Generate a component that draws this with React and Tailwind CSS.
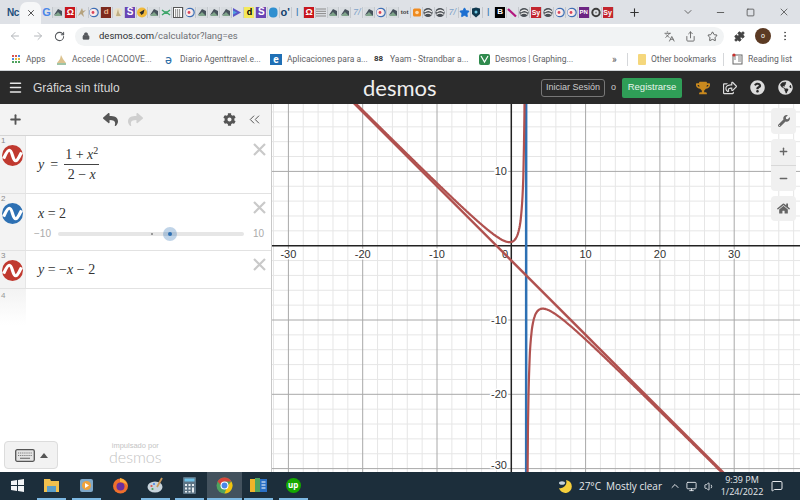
import {
  ArrowLeft,
  ArrowRight,
  RotateCw,
  Lock,
  Star,
  Share,
  Puzzle,
  MoreVertical,
  Plus,
  Minus,
  X,
  ChevronDown,
  ChevronUp,
  Square,
  Menu,
  ChevronsLeft,
  Monitor,
  Volume1,
  MessageSquare,
  Languages,
} from 'lucide-react';
import {
  FaReply,
  FaShare,
  FaCog,
  FaWrench,
  FaHome,
  FaTrophy,
  FaRegShareSquare,
  FaQuestionCircle,
  FaGlobeAmericas,
} from 'react-icons/fa';

const FAVICONS = [
  'g', 'doc', 'omega', 'fig', 'circ', 'dred', 'figpale', 'spurple', 'rocket', 'doc', 'green', 'calc', 'circ', 'doc', 'doc', 'doc',
  'play', 'dyellow', 'spurple', 'blob', 'od', 'l', 'omega', 'lines', 'doc', 'doc', 'seven', 'doc', 'circ', 'doc', 'fox', 'orange',
  'swirl', 'swirl', 'seven', 'star', 'shield', 'l', 'bblack', 'slash', 'swirl', 'sy', 'swirl', 'circ', 'circ', 'pn', 'ring', 'sy',
];

function Favicon({ kind }) {
  const box = 'w-[10px] h-[11px] flex items-center justify-center leading-none font-bold';
  switch (kind) {
    case 'g':
      return <span className={`${box} text-[11px] text-[#4a86e8]`}>G</span>;
    case 'omega':
      return <span className={`${box} bg-[#c8161d] text-white text-[9px]`}>Ω</span>;
    case 'dred':
      return <span className={`${box} bg-[#7d2a1e] text-[#e8b48c] text-[8px]`}>d</span>;
    case 'spurple':
      return <span className={`${box} bg-[#6a45b5] text-white text-[10px]`}>S</span>;
    case 'dyellow':
      return <span className={`${box} bg-[#f3e85c] text-black text-[9px]`}>d</span>;
    case 'od':
      return <span className={`${box} text-[#123f6d] text-[11px]`}>o'</span>;
    case 'l':
      return <span className={`${box} text-[#3f7fb5] text-[11px] font-normal`}>l</span>;
    case 'seven':
      return <span className={`${box} text-[#7fa3c9] text-[9px] italic font-normal`}>7/</span>;
    case 'bblack':
      return <span className={`${box} bg-black text-white text-[8px]`}>B</span>;
    case 'sy':
      return <span className={`${box} bg-[#c3252e] text-white text-[7px]`}>Sy</span>;
    case 'pn':
      return <span className={`${box} bg-[#6c2583] text-white text-[6px]`}>PN</span>;
    case 'fox':
      return <span className={`${box} text-[#3b3b3b] text-[6px]`}>tot</span>;
    case 'star':
      return <Star size={11} className="text-[#1c6fd1] fill-[#1c6fd1]" />;
    default:
      break;
  }
  const drawings = {
    doc: (
      <>
        <rect x="0" y="0" width="10" height="11" fill="#d8dce0" />
        <path d="M1 8 L5 2 L9 4 L9 9 L4 7 Z" fill="#47525c" />
        <path d="M1 9 L5 5 L9 9 Z" fill="#7fa48a" />
      </>
    ),
    fig: <path d="M5 1 L6 4 L9 3 L6 6 L7 10 L4 7 L1 9 L3 5 Z" fill="#b5a27e" />,
    figpale: (
      <>
        <circle cx="5" cy="5.5" r="4.5" fill="#e9e1c9" />
        <path d="M5 2 L6 6 L8 9 L3 9 Z" fill="#bfae84" />
      </>
    ),
    circ: (
      <>
        <circle cx="5" cy="5.5" r="4.2" fill="none" stroke="#3f6fb5" strokeWidth="1.2" />
        <circle cx="4" cy="5.5" r="3.4" fill="#fbeaea" />
        <circle cx="4" cy="5.5" r="1.4" fill="#d9455a" />
      </>
    ),
    rocket: (
      <>
        <circle cx="5" cy="5.5" r="5" fill="#f1b93a" />
        <path d="M7.5 2.5 L6.5 6.5 L4.5 8 L3.5 6.5 L2.5 5.5 Z" fill="#2c2c2c" />
      </>
    ),
    green: <path d="M1 3 L5 6 L9 3 M1 8 L5 5 L9 8" fill="none" stroke="#3fa66b" strokeWidth="1.5" />,
    calc: (
      <>
        <rect x="0.5" y="0.5" width="9" height="10" fill="#fff" stroke="#555" />
        <path d="M2 3 H8 M2 5 H8 M2 7 H8 M2 9 H8" stroke="#3c3c3c" strokeWidth="1" strokeDasharray="1.2 0.8" />
      </>
    ),
    play: (
      <>
        <path d="M1 1 L9 5.5 L1 10 Z" fill="#5a55c8" />
        <path d="M1 3.5 L5 5.5 L1 7.5 Z" fill="#4fa3e0" />
      </>
    ),
    blob: <rect x="1" y="0.5" width="8.5" height="10" rx="4" fill="#2f8fd0" />,
    lines: <path d="M0 2 H10 M0 4.3 H10 M0 6.6 H10 M0 9 H10" stroke="#8a8a8a" strokeWidth="1" />,
    orange: (
      <>
        <rect x="1" y="1.5" width="8" height="8" rx="1.5" fill="#ef8a1e" />
        <circle cx="5" cy="5.5" r="1.8" fill="#ffd9a8" />
      </>
    ),
    swirl: (
      <>
        <circle cx="5" cy="5.5" r="4.6" fill="#4a4f55" />
        <path d="M1.5 5 C4 2.5 7 3 9 5 M1.5 7.5 C4 5.5 6.5 6 8.5 7.5" fill="none" stroke="#e8e8e8" strokeWidth="1.2" />
      </>
    ),
    shield: (
      <>
        <path d="M1 1.5 L5 0.5 L9 1.5 L9 7 L5 10.5 L1 7 Z" fill="#10394f" />
        <circle cx="5" cy="5" r="1.5" fill="#6fc7e0" />
      </>
    ),
    slash: <path d="M1 2 L9 9.5" stroke="#b3177e" strokeWidth="2.2" />,
    ring: (
      <>
        <circle cx="5" cy="5.5" r="3.7" fill="none" stroke="#3d3d3d" strokeWidth="2" />
        <circle cx="5" cy="5.5" r="1" fill="#8a8a8a" />
      </>
    ),
  };
  return (
    <svg width="10" height="11" viewBox="0 0 10 11">
      {drawings[kind]}
    </svg>
  );
}

function TabStrip() {
  return (
    <div className="h-[24px] shrink-0 bg-[#dee1e6] flex items-center pl-[7px] font-['Liberation_Sans',sans-serif]">
      <span className="w-[12px] text-[10px] font-bold text-[#1d4f7c] tracking-tighter">Nc</span>
      <div className="ml-[1px] w-[21px] h-[22px] mt-[2px] bg-[#f6f7f8] rounded-t-[7px] flex items-center justify-center">
        <X size={10} className="text-[#333]" strokeWidth={2} />
      </div>
      <div className="flex items-center">
        {FAVICONS.map((kind, i) => (
          <div key={i} className="w-[11.94px] flex items-center justify-center border-r border-[#c4c8cd]">
            <Favicon kind={kind} />
          </div>
        ))}
      </div>
      <Plus size={13} className="ml-[14px] text-[#333]" strokeWidth={2} />
      <div className="flex-1" />
      <ChevronDown size={12} className="text-[#666] mr-[21px]" />
      <Minus size={11} className="text-[#555] mr-[20px]" />
      <Square size={9} className="text-[#444] mr-[23px]" />
      <X size={12} className="text-[#444] mr-[10px]" strokeWidth={1.5} />
    </div>
  );
}

function Toolbar() {
  return (
    <div className="h-[24px] shrink-0 bg-white flex items-center font-['Roboto',sans-serif]">
      <ArrowLeft size={12} className="ml-[9px] text-[#b4b7bb]" />
      <ArrowRight size={12} className="ml-[11px] text-[#b4b7bb]" />
      <RotateCw size={11} className="ml-[10px] text-[#55585c]" strokeWidth={2.2} />
      <div className="ml-[10px] w-[649px] h-[19px] bg-[#f1f3f4] rounded-full flex items-center pl-[7px] pr-[6px]">
        <Lock size={8} className="text-[#55585c] fill-[#55585c]" />
        <span className="ml-[9px] text-[9.5px] text-[#2c2e31]">
          desmos.com<span className="text-[#6d7074]">/calculator?lang=es</span>
        </span>
        <div className="flex-1" />
        <Languages size={11} className="text-[#666]" />
        <Share size={11} className="ml-[10px] text-[#666]" />
        <Star size={11} className="ml-[11px] text-[#555]" />
      </div>
      <Puzzle size={11} className="ml-[10px] text-[#444] fill-[#444]" />
      <div className="ml-[10px] w-[16px] h-[16px] rounded-full bg-[#5b3a23] text-white text-[7px] flex items-center justify-center">o</div>
      <MoreVertical size={12} className="ml-[8px] text-[#555]" />
    </div>
  );
}

function Bookmark({ icon, label, className = '' }) {
  return (
    <div className={`flex items-center gap-[5px] whitespace-nowrap ${className}`}>
      {icon}
      <span>{label}</span>
    </div>
  );
}

function Bookmarks() {
  return (
    <div className="h-[23px] shrink-0 bg-white flex items-center text-[8.5px] text-[#5f6266] font-['Roboto',sans-serif] border-b border-[#d0d3d6]">
      <Bookmark
        className="ml-[11px] w-[39px]"
        label="Apps"
        icon={
          <svg width="10" height="10" viewBox="0 0 10 10">
            <path d="M1 1h2v2H1z M4 1h2v2H4z" fill="#d9534f" />
            <path d="M7 1h2v2H7z M1 4h2v2H1z" fill="#4a86e8" />
            <path d="M4 4h2v2H4z M7 4h2v2H7z" fill="#e8b63a" />
            <path d="M1 7h2v2H1z M4 7h2v2H4z M7 7h2v2H7z" fill="#4fa35f" />
          </svg>
        }
      />
      <Bookmark
        className="ml-[6px] w-[109px]"
        label="Accede | CACOOVE..."
        icon={
          <svg width="11" height="11" viewBox="0 0 11 11">
            <path d="M5 1 L7 5 L10 9 L1 9 L4 5 Z" fill="#dcc28e" />
            <path d="M1 10 H10" stroke="#7fb08a" strokeWidth="1.5" />
          </svg>
        }
      />
      <Bookmark
        className="w-[105px]"
        label="Diario Agenttravel.e..."
        icon={<span className="w-[10px] text-[13px] leading-none text-[#2e6fa8]">ә</span>}
      />
      <Bookmark
        className="w-[104px]"
        label="Aplicaciones para a..."
        icon={<span className="w-[12px] h-[11px] bg-[#1f6fb5] text-white text-[10px] font-bold leading-[11px] text-center">e</span>}
      />
      <Bookmark
        className="w-[105px]"
        label="Yaam - Strandbar a..."
        icon={<span className="w-[11px] text-[8px] leading-none font-bold text-[#333]">88</span>}
      />
      <Bookmark
        className="w-[133px]"
        label="Desmos | Graphing..."
        icon={
          <svg width="11" height="11" viewBox="0 0 11 11">
            <rect width="11" height="11" rx="2" fill="#2f8a4d" />
            <path d="M2 2 L5.5 8 L9 2" fill="none" stroke="#fff" strokeWidth="1.2" />
          </svg>
        }
      />
      <span className="w-[10px] text-[10px] text-[#555]">»</span>
      <div className="ml-[5px] h-[13px] w-px bg-[#d5d7da]" />
      <Bookmark
        className="ml-[10px] w-[85px]"
        label="Other bookmarks"
        icon={<span className="w-[8px] h-[11px] rounded-[1px] bg-[#f5d77c]" />}
      />
      <div className="h-[13px] w-px bg-[#d5d7da]" />
      <Bookmark
        className="ml-[8px]"
        label="Reading list"
        icon={
          <svg width="11" height="12" viewBox="0 0 11 12">
            <rect x="1" y="2" width="9" height="9" fill="none" stroke="#666" />
            <path d="M6 4 H9 M6 6 H9 M6 8 H9 M2 4 H4 M2 6 H4" stroke="#666" strokeWidth="0.8" />
            <circle cx="2" cy="2" r="1.6" fill="#c9302c" />
          </svg>
        }
      />
    </div>
  );
}

function TopBar() {
  return (
    <div className="h-[33px] shrink-0 bg-[#2a2a2a] flex items-center text-white font-['Liberation_Sans',sans-serif]">
      <Menu size={15} className="ml-[8px] text-[#e8e8e8]" strokeWidth={2.4} />
      <span className="ml-[10px] w-[140px] text-[12px] text-[#d8d8d8]">Gráfica sin título</span>
      <span className="ml-[190px] w-[92px] text-[22px] leading-none font-['Lato',sans-serif] text-[#efefef]">desmos</span>
      <div className="ml-[86px] w-[64px] h-[18px] border border-[#777] rounded-[3px] text-[9px] text-[#ccc] flex items-center justify-center">
        Iniciar Sesión
      </div>
      <span className="w-[17px] text-center text-[9px] text-[#ccc]">o</span>
      <div className="w-[60px] h-[20px] bg-[#2f9e57] rounded-[2px] text-[9.5px] text-[#e8f5ec] flex items-center justify-center">
        Registrarse
      </div>
      <FaTrophy size={14} className="ml-[14px] text-[#c9891e]" />
      <FaRegShareSquare size={14} className="ml-[13px] text-[#ddd]" />
      <FaQuestionCircle size={15} className="ml-[13px] text-[#ddd]" />
      <FaGlobeAmericas size={15} className="ml-[13px] text-[#ddd]" />
    </div>
  );
}

function WaveIcon({ color }) {
  return (
    <svg width="21" height="21" viewBox="0 0 20 20">
      <circle cx="10" cy="10" r="10" fill={color} />
      <path d="M1.5 13 C3.5 9 5 5 7 5 C10 5 10 15 13 15 C15 15 16.5 11 18.5 7" fill="none" stroke="#fff" strokeWidth="3" />
    </svg>
  );
}

function CloseMark() {
  return (
    <svg width="13" height="13" viewBox="0 0 13 13" className="mt-[7px] mr-[5px] shrink-0">
      <path d="M1 1 L12 12 M12 1 L1 12" stroke="#c9c9c9" strokeWidth="2.2" />
    </svg>
  );
}

function Expression({ n, color, height, children }) {
  return (
    <div className={`flex border-b border-[#e2e2e2] ${height}`}>
      <div className="w-[26px] shrink-0 bg-[#f3f3f3] border-r border-[#e6e6e6] relative flex justify-center pt-[9px]">
        <span className="absolute left-[1px] top-[0px] text-[8px] leading-[10px] text-[#8a8a8a]">{n}</span>
        <WaveIcon color={color} />
      </div>
      <div className="flex-1 min-w-0">{children}</div>
      <CloseMark />
    </div>
  );
}

const mathClass = "font-['Liberation_Serif',serif] text-[14px] text-[#333] leading-none";

function KeyboardGlyph() {
  return (
    <svg width="20" height="13" viewBox="0 0 20 13">
      <rect x="0.7" y="0.7" width="18.6" height="11.6" rx="1.5" fill="#e4e4e4" stroke="#555" strokeWidth="1.3" />
      <path d="M3 4 H17 M3 6.5 H17" stroke="#777" strokeWidth="1.2" strokeDasharray="1.2 0.9" />
      <path d="M5 9.3 H15" stroke="#777" strokeWidth="1.2" />
    </svg>
  );
}

function ExprPanel() {
  return (
    <div className="w-[272px] shrink-0 bg-white border-r border-[#c8c8c8] flex flex-col font-['Liberation_Sans',sans-serif]">
      <div className="h-[32px] shrink-0 bg-[#f3f3f3] border-b border-[#d5d5d5] flex items-center text-[#555]">
        <Plus size={15} className="ml-[8px]" strokeWidth={3} />
        <FaReply size={15} className="ml-[80px]" />
        <FaShare size={15} className="ml-[10px] text-[#cfcfcf]" />
        <FaCog size={13} className="ml-[80px]" />
        <ChevronsLeft size={17} className="ml-[10px]" strokeWidth={1.4} />
      </div>

      <Expression n="1" color="#c0392f" height="h-[58px]">
        <div className={`${mathClass} h-full pl-[12px] flex items-center gap-[6px]`}>
          <span className="italic">y</span>
          <span>=</span>
          <div className="flex flex-col items-center text-[14px]">
            <div className="px-[1px] pb-[2px] border-b border-[#444]">
              1 + <span className="italic">x</span>
              <sup className="text-[10px] leading-none">2</sup>
            </div>
            <div className="pt-[3px]">
              2 − <span className="italic">x</span>
            </div>
          </div>
        </div>
      </Expression>

      <Expression n="2" color="#2d70b3" height="h-[57px]">
        <div className={`${mathClass} pl-[12px] pt-[13px]`}>
          <span className="italic">x</span> = 2
        </div>
        <div className="flex items-center mt-[5px] text-[10px] text-[#aaa] whitespace-nowrap">
          <span className="ml-[8px] w-[24px] shrink-0">−10</span>
          <div className="w-[186px] h-[4px] rounded-full bg-[#e6e6e6] relative shrink-0">
            <span className="absolute left-[93px] top-[1px] w-[2px] h-[2px] bg-[#999]" />
            <span className="absolute left-[105px] top-[-5px] w-[14px] h-[14px] rounded-full bg-[#2d70b3]/30 flex items-center justify-center">
              <span className="w-[4px] h-[4px] rounded-full bg-[#2d70b3]" />
            </span>
          </div>
          <span className="ml-[9px] shrink-0">10</span>
        </div>
      </Expression>

      <Expression n="3" color="#c0392f" height="h-[38px]">
        <div className={`${mathClass} pl-[12px] pt-[12px]`}>
          <span className="italic">y</span> = −<span className="italic">x</span> − 2
        </div>
      </Expression>

      <div className="flex-1 flex flex-col">
        <div className="w-[26px] h-[36px] bg-gradient-to-b from-[#f3f3f3] to-white text-[8px] leading-[10px] pl-[1px] pt-[2px] text-[#999]">4</div>
        <div className="flex-1" />
        <div className="flex items-end pb-[3px] pl-[4px]">
          <div className="w-[54px] h-[28px] bg-[#f2f2f2] border border-[#dcdcdc] rounded-[4px] flex items-center justify-center gap-[5px]">
            <KeyboardGlyph />
            <span className="w-0 h-0 border-x-[4px] border-x-transparent border-b-[5px] border-b-[#555]" />
          </div>
          <div className="ml-[51px] flex flex-col items-center text-[#c4c4c4] mb-[6px]">
            <span className="text-[7.5px] leading-[9px]">impulsado por</span>
            <span className="text-[16px] leading-[13px] font-light font-['Lato',sans-serif]">desmos</span>
          </div>
        </div>
      </div>
    </div>
  );
}

const sx = (x) => 511.3 + 7.43 * x;
const sy = (y) => 245.7 - 7.43 * y;

function sample(from, to, steps) {
  const pts = [];
  for (let i = 0; i <= steps; i++) {
    const x = from + ((to - from) * i) / steps;
    const y = (1 + x * x) / (2 - x);
    pts.push(`${sx(x).toFixed(1)},${sy(y).toFixed(1)}`);
  }
  return pts.join(' ');
}

function Graph() {
  const minorX = [];
  for (let x = -32; x <= 38; x += 2) if (x % 10 !== 0) minorX.push(x);
  const minorY = [];
  for (let y = -30; y <= 18; y += 2) if (y % 10 !== 0) minorY.push(y);
  const labelClass = "text-[11px] fill-[#333] stroke-white [stroke-width:3px] [paint-order:stroke] font-['Liberation_Sans',sans-serif]";

  return (
    <div className="flex-1 relative bg-white overflow-hidden">
      <svg width="528" height="368" viewBox="272 104 528 368" className="block">
        {minorX.map((x) => (
          <line key={x} x1={sx(x)} x2={sx(x)} y1="104" y2="472" stroke="#e6e6e6" />
        ))}
        {minorY.map((y) => (
          <line key={y} y1={sy(y)} y2={sy(y)} x1="272" x2="800" stroke="#e6e6e6" />
        ))}
        {[-30, -20, -10, 10, 20, 30].map((x) => (
          <line key={x} x1={sx(x)} x2={sx(x)} y1="104" y2="472" stroke="#a8a8a8" />
        ))}
        {[-30, -20, -10, 10].map((y) => (
          <line key={y} y1={sy(y)} y2={sy(y)} x1="272" x2="800" stroke="#a8a8a8" />
        ))}
        <line x1={sx(0)} x2={sx(0)} y1="104" y2="472" stroke="#222" strokeWidth="1.5" />
        <line y1={sy(0)} y2={sy(0)} x1="272" x2="800" stroke="#222" strokeWidth="1.5" />

        {[-30, -20, -10, 10, 20, 30].map((x) => (
          <text key={x} x={sx(x)} y="258" textAnchor="middle" className={labelClass}>
            {x}
          </text>
        ))}
        <text x="505" y="258" textAnchor="middle" className={labelClass}>0</text>
        {[10, -10, -20, -30].map((y) => (
          <text key={y} x="507" y={Math.min(sy(y) + 4, 469)} textAnchor="end" className={labelClass}>
            {y}
          </text>
        ))}

        <line x1={sx(2)} x2={sx(2)} y1="104" y2="472" stroke="#2d70b3" strokeWidth="2.5" />
        <polyline points={sample(-24, 1.92, 500)} fill="none" stroke="#b0514f" strokeWidth="2.2" />
        <polyline points={sample(2.06, 34, 500)} fill="none" stroke="#b0514f" strokeWidth="2.2" />
        <line x1={sx(-24)} y1={sy(22)} x2={sx(34)} y2={sy(-36)} stroke="#b0514f" strokeWidth="2.4" />
      </svg>

      <div className="absolute right-[4px] top-[4px] flex flex-col gap-[5px] text-[#666]">
        <div className="w-[25px] h-[26px] bg-[#f0f0f0] rounded-[4px] flex items-center justify-center">
          <FaWrench size={12} />
        </div>
        <div className="w-[25px] h-[52px] bg-[#f0f0f0] rounded-[4px] flex flex-col">
          <div className="flex-1 flex items-center justify-center border-b border-[#d8d8d8]">
            <Plus size={11} strokeWidth={3} />
          </div>
          <div className="flex-1 flex items-center justify-center">
            <Minus size={11} strokeWidth={3} />
          </div>
        </div>
        <div className="w-[25px] h-[25px] bg-[#f0f0f0] rounded-[4px] flex items-center justify-center">
          <FaHome size={13} />
        </div>
      </div>
    </div>
  );
}

function TaskItem({ active, running, children }) {
  return (
    <div className={`w-[34.5px] h-full shrink-0 flex flex-col items-center ${active ? 'bg-[#43525e]' : ''}`}>
      <div className="flex-1 flex items-center justify-center">{children}</div>
      <div className={`h-[2px] ${active ? 'w-full' : 'w-[29px]'} ${running ? 'bg-[#7db9e3]' : ''}`} />
    </div>
  );
}

function Taskbar() {
  return (
    <div className="h-[28px] shrink-0 bg-[#1c2e3b] flex items-center text-[#e6e9ec] font-['Open_Sans',sans-serif]">
      <TaskItem>
        <svg width="13" height="13" viewBox="0 0 13 13">
          <path d="M0 2 L6 1 V6 H0 Z M7 1 L13 0 V6 H7 Z M0 7 H6 V12 L0 11 Z M7 7 H13 V13 L7 12 Z" fill="#f2f4f6" />
        </svg>
      </TaskItem>
      <TaskItem running>
        <svg width="17" height="15" viewBox="0 0 17 15">
          <path d="M1 1 H7 L8 3 H16 V14 H1 Z" fill="#f2c14e" />
          <rect x="4" y="8" width="9" height="6" fill="#5c9fc9" />
        </svg>
      </TaskItem>
      <TaskItem running>
        <svg width="15" height="15" viewBox="0 0 15 15">
          <rect x="1" y="1" width="13" height="13" rx="2" fill="#7fa8c9" />
          <circle cx="7.5" cy="7.5" r="4.5" fill="#f0a23c" />
          <path d="M6 5 L10 7.5 L6 10 Z" fill="#fff" />
        </svg>
      </TaskItem>
      <TaskItem>
        <svg width="17" height="17" viewBox="0 0 17 17">
          <circle cx="8.5" cy="9" r="7.5" fill="#f0702c" />
          <circle cx="8.5" cy="9.5" r="4" fill="#6b2fa0" />
          <path d="M8 1 C12 2 15 5 15.5 9 C14 6 11 5 8 5 Z" fill="#fbb03b" />
        </svg>
      </TaskItem>
      <TaskItem running>
        <svg width="17" height="17" viewBox="0 0 17 17">
          <ellipse cx="8" cy="10" rx="7.5" ry="5.5" fill="#c6d3dc" />
          <circle cx="4.5" cy="9" r="1.1" fill="#d9534f" />
          <circle cx="7" cy="7" r="1.1" fill="#4a86e8" />
          <circle cx="5.5" cy="12" r="1.1" fill="#4fa35f" />
          <path d="M10 10 L15 1" stroke="#c99a5b" strokeWidth="1.8" />
        </svg>
      </TaskItem>
      <TaskItem running>
        <svg width="13" height="17" viewBox="0 0 13 17">
          <rect width="13" height="17" rx="1" fill="#5d7485" />
          <rect x="1.5" y="1.5" width="10" height="3" fill="#6fc1e8" />
          <path d="M2 7 h2 v2 h-2z M5.5 7 h2 v2 h-2z M9 7 h2 v2 h-2z M2 10.5 h2 v2 h-2z M5.5 10.5 h2 v2 h-2z M9 10.5 h2 v5 h-2z M2 14 h2 v1.5 h-2z M5.5 14 h2 v1.5 h-2z" fill="#e8eef2" />
        </svg>
      </TaskItem>
      <TaskItem active running>
        <svg width="17" height="17" viewBox="0 0 32 32">
          <circle cx="16" cy="16" r="15" fill="#4fa35f" />
          <path d="M16 1 A15 15 0 0 1 29 8.5 L16 8.5 Z M3 8.5 A15 15 0 0 1 16 1 L16 8.5 L10 16 Z" fill="#d9453c" />
          <path d="M29 8.5 A15 15 0 0 1 16 31 L22 16 Z" fill="#f4c20d" />
          <circle cx="16" cy="16" r="7.5" fill="#fff" />
          <circle cx="16" cy="16" r="5.5" fill="#4a86e8" />
        </svg>
      </TaskItem>
      <TaskItem running>
        <svg width="18" height="14" viewBox="0 0 18 14">
          <rect x="0" y="1" width="5" height="13" fill="#f0b429" />
          <rect x="5" y="0" width="5" height="14" fill="#4fa35f" />
          <rect x="10" y="1" width="7" height="13" fill="#2a6fc4" />
          <path d="M11.5 4 H15.5 M11.5 7 H15.5 M11.5 10 H15.5" stroke="#fff" />
        </svg>
      </TaskItem>
      <TaskItem running>
        <span className="w-[15px] h-[15px] rounded-full bg-[#14a800] text-white text-[8px] font-bold leading-none flex items-center justify-center">up</span>
      </TaskItem>

      <div className="flex-1" />
      <svg width="15" height="14" viewBox="0 0 15 14">
        <path d="M8 1 A6.5 6.5 0 1 1 1 9 A6 6 0 0 0 8 1 Z" fill="#f5cf3c" />
        <ellipse cx="4" cy="4" rx="3" ry="1.8" fill="#c6d3dc" />
      </svg>
      <span className="ml-[6px] text-[10px]">27°C</span>
      <span className="ml-[5px] text-[10px]">Mostly clear</span>
      <ChevronUp size={12} className="ml-[7px]" />
      <Monitor size={11} className="ml-[5px]" />
      <Volume1 size={11} className="ml-[7px]" />
      <div className="ml-[4px] w-[46px] flex flex-col items-center text-[9px] leading-[12px]">
        <span>9:39 PM</span>
        <span>1/24/2022</span>
      </div>
      <MessageSquare size={12} className="ml-[6px] mr-[17px]" />
    </div>
  );
}

export default function App() {
  return (
    <div className="w-[800px] h-[500px] flex flex-col overflow-hidden bg-white">
      <TabStrip />
      <Toolbar />
      <Bookmarks />
      <TopBar />
      <div className="flex-1 min-h-0 flex">
        <ExprPanel />
        <Graph />
      </div>
      <Taskbar />
    </div>
  );
}
